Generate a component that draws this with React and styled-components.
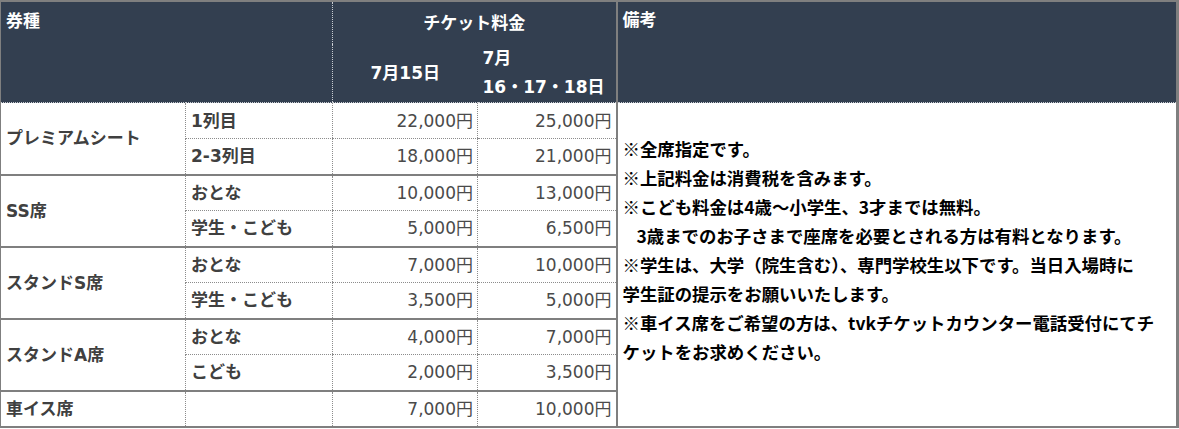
import React from 'react';
import styled, { createGlobalStyle } from 'styled-components';

const GlobalStyle = createGlobalStyle`
  html, body {
    margin: 0;
    padding: 0;
    background: #fff;
  }
  body {
    font-family: "DejaVu Sans", "Noto Sans CJK JP", sans-serif;
  }
`;

const gray = '#7f7f7f';

// Table
const Table = styled.table`
  width: 1179px;
  border-collapse: collapse;
  table-layout: fixed;
  border-top: 2px solid ${gray};
  border-right: 3px solid ${gray};
  border-bottom: 2px solid ${gray};
  border-left: 1px solid ${gray};
  color: #404040;
`;

const HeadRow = styled.tr`
  height: ${(p) => p.$h}px;
`;

const Th = styled.th`
  background: #333f50;
  color: #fff;
  font-size: 17px;
  font-weight: 700;
  text-align: ${(p) => p.$align || 'left'};
  vertical-align: ${(p) => p.$valign || 'middle'};
  padding: ${(p) => p.$pad || '0 5px'};
  line-height: 29px;
  white-space: nowrap;
  border-bottom: 1px dotted #c9ccd2;
  border-left: ${(p) => (p.$solid ? `2px solid ${gray}` : p.$dotted ? '1px dotted #c9ccd2' : 'none')};
`;

const Row = styled.tr`
  height: 36px;
`;

const Td = styled.td`
  font-size: 17px;
  font-weight: ${(p) => (p.$bold ? 700 : 400)};
  color: ${(p) => (p.$bold ? '#404040' : '#4a4a4a')};
  text-align: ${(p) => p.$align || 'left'};
  vertical-align: middle;
  padding: 0 4px 3px 5px;
  white-space: nowrap;
  border-left: 1px dotted #8c8c8c;
  border-bottom: ${(p) => (p.$last ? `2px solid ${gray}` : '1px dotted #8c8c8c')};
`;

const Group = styled(Td)`
  border-left: none;
  border-bottom: 2px solid ${gray};
`;

const Notes = styled.td`
  border-left: 2px solid ${gray};
  vertical-align: middle;
  padding: 0 0 29px 5px;
  color: #000;
  font-family: "Noto Sans CJK JP", sans-serif;
  font-size: 17.4px;
  font-weight: 700;
  line-height: 29px;
  white-space: nowrap;
`;

const Indent = styled.span`
  padding-left: 14px;
`;

const groups = [
  {
    name: 'プレミアムシート',
    rows: [
      { label: '1列目', a: '22,000円', b: '25,000円' },
      { label: '2-3列目', a: '18,000円', b: '21,000円' },
    ],
  },
  {
    name: 'SS席',
    rows: [
      { label: 'おとな', a: '10,000円', b: '13,000円' },
      { label: '学生・こども', a: '5,000円', b: '6,500円' },
    ],
  },
  {
    name: 'スタンドS席',
    rows: [
      { label: 'おとな', a: '7,000円', b: '10,000円' },
      { label: '学生・こども', a: '3,500円', b: '5,000円' },
    ],
  },
  {
    name: 'スタンドA席',
    rows: [
      { label: 'おとな', a: '4,000円', b: '7,000円' },
      { label: 'こども', a: '2,000円', b: '3,500円' },
    ],
  },
  {
    name: '車イス席',
    rows: [{ label: '', a: '7,000円', b: '10,000円' }],
  },
];

const notes = (
  <>
    ※全席指定です。<br />
    ※上記料金は消費税を含みます。<br />
    ※こども料金は4歳～小学生、3才までは無料。<br />
    <Indent>3歳までのお子さまで座席を必要とされる方は有料となります。</Indent><br />
    ※学生は、大学（院生含む）、専門学校生以下です。当日入場時に<br />
    学生証の提示をお願いいたします。<br />
    ※車イス席をご希望の方は、tvkチケットカウンター電話受付にてチ<br />
    ケットをお求めください。
  </>
);

const App = () => {
  const body = [];
  groups.forEach((g, gi) => {
    g.rows.forEach((r, ri) => {
      const last = ri === g.rows.length - 1;
      body.push(
        <Row key={`${gi}-${ri}`}>
          {ri === 0 && (
            <Group $bold rowSpan={g.rows.length}>
              {g.name}
            </Group>
          )}
          <Td $bold $last={last}>{r.label}</Td>
          <Td $align="right" $last={last}>{r.a}</Td>
          <Td $align="right" $last={last}>{r.b}</Td>
          {gi === 0 && ri === 0 && <Notes rowSpan={9}>{notes}</Notes>}
        </Row>
      );
    });
  });

  return (
    <>
      <GlobalStyle />
      <Table>
        <colgroup>
          <col style={{ width: 185 }} />
          <col style={{ width: 147 }} />
          <col style={{ width: 145 }} />
          <col style={{ width: 139 }} />
          <col />
        </colgroup>
        <thead>
          <HeadRow $h={43}>
            <Th colSpan={2} rowSpan={2} $valign="top" $pad="5px 5px 0">券種</Th>
            <Th colSpan={2} $align="center" $dotted style={{ borderBottom: 'none' }}>チケット料金</Th>
            <Th rowSpan={2} $valign="top" $pad="4px 5px 0" $solid>備考</Th>
          </HeadRow>
          <HeadRow $h={54}>
            <Th $align="center" $dotted>7月15日</Th>
            <Th>7月<br />16・17・18日</Th>
          </HeadRow>
        </thead>
        <tbody>{body}</tbody>
      </Table>
    </>
  );
};

export default App;
